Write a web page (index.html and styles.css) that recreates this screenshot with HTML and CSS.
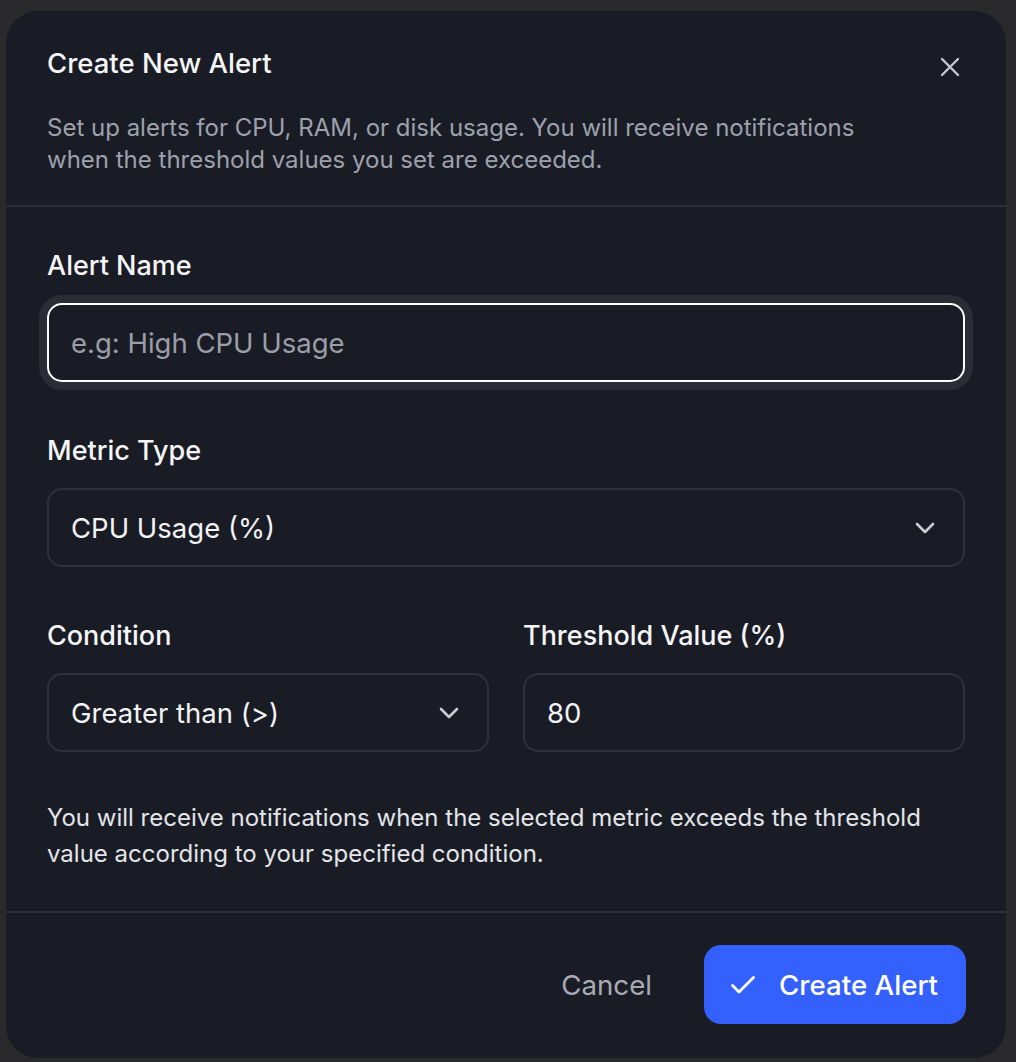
FILE: index.html
```html
<!DOCTYPE html>
<html lang="en">
<head>
<meta charset="utf-8">
<title>Create New Alert</title>
<link rel="stylesheet" href="styles.css">
</head>
<body>
<div class="dialog">
  <div class="header">
    <div class="title-row">
      <h2 class="title">Create New Alert</h2>
      <button class="close" aria-label="Close">
        <svg width="20" height="20" viewBox="0 0 20 20" fill="none" stroke="currentColor" stroke-width="2.4" stroke-linecap="round"><path d="M2 2 L18 18 M18 2 L2 18"/></svg>
      </button>
    </div>
    <p class="desc">Set up alerts for CPU, RAM, or disk usage. You will receive notifications when the threshold values you set are exceeded.</p>
  </div>
  <div class="body">
    <div class="field">
      <label class="label">Alert Name</label>
      <div class="control focused"><span class="placeholder">e.g: High CPU Usage</span></div>
    </div>
    <div class="field">
      <label class="label">Metric Type</label>
      <div class="control select"><span class="value">CPU Usage (%)</span>
        <svg class="chev" width="20" height="12" viewBox="0 0 20 12" fill="none" stroke="currentColor" stroke-width="2.6" stroke-linecap="round" stroke-linejoin="round"><path d="M2 2 L10 10 L18 2"/></svg>
      </div>
    </div>
    <div class="row">
      <div class="field">
        <label class="label">Condition</label>
        <div class="control select"><span class="value">Greater than (&gt;)</span>
          <svg class="chev" width="20" height="12" viewBox="0 0 20 12" fill="none" stroke="currentColor" stroke-width="2.6" stroke-linecap="round" stroke-linejoin="round"><path d="M2 2 L10 10 L18 2"/></svg>
        </div>
      </div>
      <div class="field">
        <label class="label">Threshold Value (%)</label>
        <div class="control"><span class="value">80</span></div>
      </div>
    </div>
    <p class="helper">You will receive notifications when the selected metric exceeds the threshold value according to your specified condition.</p>
  </div>
  <div class="footer">
    <button class="btn-cancel">Cancel</button>
    <button class="btn-primary">
      <svg width="26" height="20" viewBox="0 0 26 20" fill="none" stroke="currentColor" stroke-width="2.8" stroke-linecap="round" stroke-linejoin="round"><path d="M2.5 10.5 L9 17 L23.5 2.5"/></svg>
      <span>Create Alert</span>
    </button>
  </div>
</div>
</body>
</html>
```
FILE: styles.css
```css
* { box-sizing: border-box; }
html, body { margin: 0; padding: 0; }
body {
  background: #2a2a2c;
  font-family: Inter, "Liberation Sans", sans-serif;
  width: 1016px;
  height: 1062px;
  overflow: hidden;
}
.dialog {
  margin: 11px 0 0 6px;
  width: 1000px;
  height: 1047px;
  background: #1a1c25;
  border-radius: 32px;
  display: flex;
  flex-direction: column;
}
.header {
  padding: 32px 41px 29px 41px;
  border-bottom: 2px solid #2c2e39;
}
.title-row {
  display: flex;
  justify-content: space-between;
  align-items: flex-start;
}
.title {
  margin: 0;
  font-size: 27.5px;
  line-height: 40px;
  font-weight: 500;
  color: #f5f5f7;
}
.close {
  margin: 14px 5px 0 0;
  padding: 0;
  border: 0;
  background: none;
  color: #c4c7cf;
  width: 20px;
  height: 20px;
  display: block;
}
.close svg { display: block; }
.desc {
  margin: 29px 0 0;
  max-width: 840px;
  font-size: 24px;
  line-height: 32px;
  color: #9da1ac;
}
.body {
  padding: 41px 41px 39px;
  display: flex;
  flex-direction: column;
  gap: 51px;
  border-bottom: 2px solid #2c2e39;
}
.field {
  display: flex;
  flex-direction: column;
  gap: 19px;
}
.label {
  font-size: 27px;
  line-height: 36px;
  font-weight: 500;
  color: #f5f5f7;
}
.control {
  height: 79px;
  border: 2px solid #2e303c;
  border-radius: 15px;
  padding: 0 28px 0 22px;
  display: flex;
  align-items: center;
  justify-content: space-between;
  font-size: 27.5px;
  color: #f2f3f5;
}
.control.focused {
  border-color: #ffffff;
  box-shadow: 0 0 0 8px #2a2c36;
}
.placeholder { color: #9a9ea9; }
.chev { color: #c9ccd3; display: block; }
.row {
  display: grid;
  grid-template-columns: 1fr 1fr;
  gap: 34px;
}
.helper {
  margin: -3px 0 0;
  font-size: 24px;
  line-height: 36px;
  color: #e3e5e9;
}
.footer {
  padding: 32px 40px 33px 41px;
  display: flex;
  justify-content: flex-end;
  align-items: center;
  gap: 24px;
}
.btn-cancel {
  background: none;
  border: 0;
  font-family: inherit;
  font-size: 27.7px;
  color: #a8abb4;
  padding: 0 28px;
  height: 79px;
}
.btn-primary {
  height: 79px;
  background: #3461fe;
  border: 0;
  border-radius: 17px;
  color: #ffffff;
  font-family: inherit;
  font-size: 27.7px;
  font-weight: 500;
  padding: 0 28px 0 26px;
  display: flex;
  align-items: center;
  gap: 23px;
}
.btn-primary svg { display: block; }
```
